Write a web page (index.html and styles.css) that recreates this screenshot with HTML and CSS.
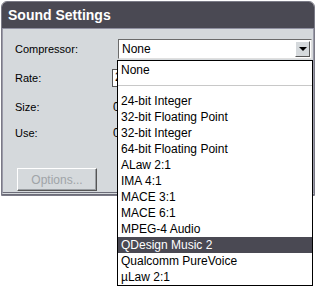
FILE: index.html
```html
<!DOCTYPE html>
<html lang="en">
  <head>
    <meta charset="UTF-8" />
    <title>Sound Settings</title>
    <link rel="stylesheet" href="styles.css">
  </head>
  <body>
    <div class="window">
      <div class="titlebar">Sound Settings</div>
      <div class="content">
        <div class="row">
          <span class="label">Compressor:</span>
          <div class="combo">
            <span class="combo-text">None</span>
            <span class="combo-btn"><span class="arrow"></span></span>
          </div>
        </div>
        <div class="row gap">
          <span class="label">Rate:</span>
          <div class="field">22</div>
        </div>
        <div class="row gap">
          <span class="label">Size:</span>
          <span class="value">0</span>
        </div>
        <div class="row small">
          <span class="label">Use:</span>
          <span class="value">0</span>
        </div>
        <button class="options" disabled>Options...</button>
      </div>
    </div>

    <ul class="droplist">
      <li>None</li>
      <li class="sep"></li>
      <li>24-bit Integer</li>
      <li>32-bit Floating Point</li>
      <li>32-bit Integer</li>
      <li>64-bit Floating Point</li>
      <li>ALaw 2:1</li>
      <li>IMA 4:1</li>
      <li>MACE 3:1</li>
      <li>MACE 6:1</li>
      <li>MPEG-4 Audio</li>
      <li class="selected">QDesign Music 2</li>
      <li>Qualcomm PureVoice</li>
      <li>µLaw 2:1</li>
    </ul>
  </body>
</html>
```

FILE: styles.css
```css
body {
  margin: 0;
  background: white;
  font-family: "Liberation Sans", Arial, sans-serif;
  font-size: 12px;
  color: black;
  position: relative;
  height: 290px;
  overflow: hidden;
}

.window {
  width: 312px;
  margin-left: 1px;
  margin-top: 1px;
  border: 1px solid #7a7a86;
  border-radius: 6px 6px 0 0;
  overflow: hidden;
}

.titlebar {
  background: #4a4953;
  color: white;
  font-family: "Liberation Sans", Arial, sans-serif;
  font-weight: bold;
  font-size: 14px;
  height: 26px;
  line-height: 27px;
  padding-left: 6px;
  border-bottom: 1px solid #8f8fa0;
}

.content {
  background: #d5d9dc;
  height: 166px;
  padding: 10px 0 0 12px;
  box-sizing: border-box;
  border-bottom: 3px double #6c6c78;
  border-left: 1px solid #9a9aa8;
  border-right: 1px solid #9a9aa8;
}

.row {
  display: flex;
  align-items: center;
  height: 20px;
}

.row.gap {
  margin-top: 9px;
}

.row.small {
  margin-top: 6px;
}

.label {
  width: 100px;
  flex-shrink: 0;
  font-size: 11px;
}

.combo {
  width: 194px;
  height: 20px;
  margin-left: 3px;
  box-sizing: border-box;
  background: white;
  border: 1px solid #6b6b6b;
  border-right-color: #e0e0e0;
  border-bottom-color: #e0e0e0;
  display: flex;
  align-items: center;
  justify-content: space-between;
}

.combo-text {
  padding-left: 3px;
}

.combo-btn {
  width: 15px;
  height: 16px;
  margin-right: 1px;
  background: #d5d9dc;
  border: 1px solid white;
  border-right-color: #555;
  border-bottom-color: #555;
  box-sizing: border-box;
  display: flex;
  align-items: center;
  justify-content: center;
}

.arrow {
  width: 0;
  height: 0;
  border-left: 4px solid transparent;
  border-right: 4px solid transparent;
  border-top: 4px solid black;
}

.field {
  width: 60px;
  height: 18px;
  background: white;
  border: 1px solid #555;
  margin-left: -3px;
  padding-left: 2px;
  box-sizing: border-box;
}

.value {
  margin-left: -2px;
}

.options {
  margin-top: 25px;
  margin-left: 2px;
  width: 80px;
  height: 23px;
  font-family: "Liberation Sans", Arial, sans-serif;
  font-size: 12px;
  color: #a0a4a8;
  background: #d5d9dc;
  border: 1px solid white;
  border-right-color: #555;
  border-bottom-color: #555;
  box-shadow: inset -1px -1px 0 #9a9ea2;
}

.droplist {
  position: absolute;
  left: 117px;
  top: 60px;
  width: 196px;
  box-sizing: border-box;
  margin: 0;
  padding: 1px 0 0 0;
  list-style: none;
  background: white;
  border: 1px solid black;
}

.droplist li {
  height: 16px;
  line-height: 16px;
  padding-left: 3px;
}

.droplist li.sep {
  height: 15px;
  background: linear-gradient(#fff 7px, #c8c8c8 7px, #c8c8c8 8px, #fff 8px);
}

.droplist li.selected {
  background: #4a4953;
  color: white;
}
```
